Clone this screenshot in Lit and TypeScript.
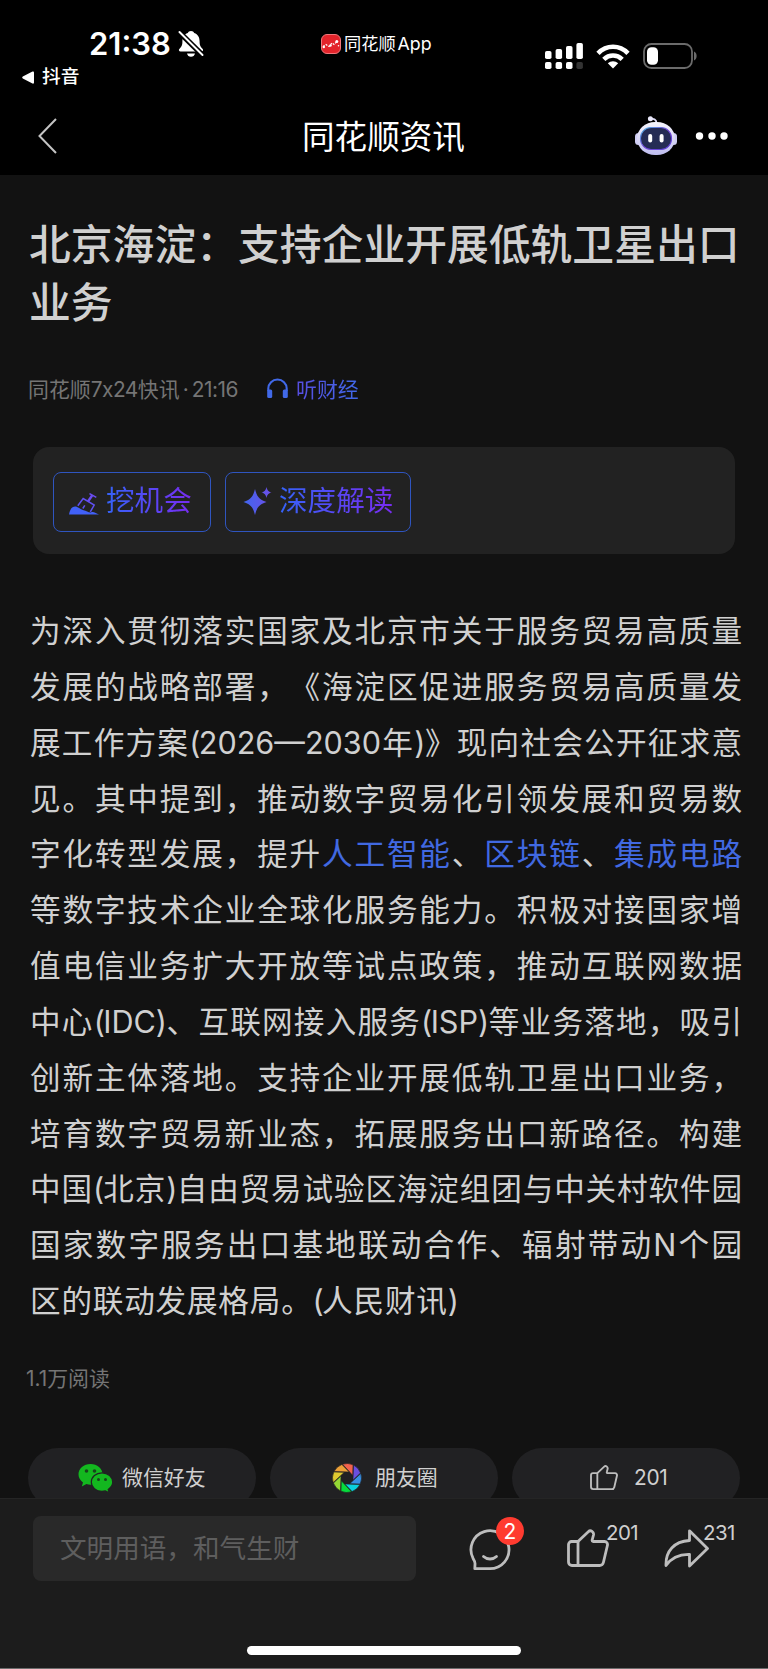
import { LitElement, html, css, svg } from "lit";
import { customElement } from "lit/decorators.js";

const LINES = [
  "为深入贯彻落实国家及北京市关于服务贸易高质量",
  "发展的战略部署，《海淀区促进服务贸易高质量发",
  "展工作方案(2026—2030年)》现向社会公开征求意",
  "见。其中提到，推动数字贸易化引领发展和贸易数",
  "字化转型发展，提升[人工智能]、[区块链]、[集成电路]",
  "等数字技术企业全球化服务能力。积极对接国家增",
  "值电信业务扩大开放等试点政策，推动互联网数据",
  "中心(IDC)、互联网接入服务(ISP)等业务落地，吸引",
  "创新主体落地。支持企业开展低轨卫星出口业务，",
  "培育数字贸易新业态，拓展服务出口新路径。构建",
  "中国(北京)自由贸易试验区海淀组团与中关村软件园",
  "国家数字服务出口基地联动合作、辐射带动N个园",
  "区的联动发展格局。(人民财讯)",
];

const formatLine = (line: string) =>
  line.split(/(\[[^\]]+\]|[()])/).map((part) => {
    if (part.startsWith("[")) return html`<a class="term">${part.slice(1, -1)}</a>`;
    if (part === "(" || part === ")") return html`<span class="paren">${part}</span>`;
    return part;
  });

const bell = svg`<svg width="26" height="28" viewBox="0 0 26 28">
  <path fill="#fff" d="M13 1c-1.600 0-2.800.8-3.200 2.100C6 4.300 4.400 7.500 4.400 11.500c0 4-1 5.200-2.600 7-.8.9-1 1.300-.8 2 .2.600.700.900 1.600.900h20.800c.900 0 1.400-.3 1.600-.9.2-.7 0-1.100-.8-2-1.600-1.800-2.600-3-2.600-7 0-4-1.600-7.200-5.400-8.400C15.800 1.800 14.600 1 13 1zM9 23.500h8c-.4 2-2 3.300-4 3.300s-3.600-1.300-4-3.300z"/>
  <path stroke="#000" stroke-width="5.400" d="M1 2 24.500 25"/>
  <path stroke="#fff" stroke-width="2" stroke-linecap="round" d="M1.500 2 24.500 25"/></svg>`;

const appBadge = svg`<svg width="20" height="20" viewBox="0 0 20 20">
  <rect x=".5" y=".5" width="19" height="19" rx="5.500" fill="#e3242b" stroke="#f0787c"/>
  <path d="M2 12.500 5 10.500 8 12.500 11 9 13 10.500 16 7.500" fill="none" stroke="#fff" stroke-width="1.200" stroke-dasharray="2 1.200"/>
  <circle cx="15.800" cy="7.600" r="1.500" fill="#fff"/><circle cx="9.500" cy="11.500" r="1.200" fill="#fff"/><circle cx="2.800" cy="13" r="1.200" fill="#fff"/><circle cx="17.500" cy="11.800" r=".8" fill="#fff"/></svg>`;

const signal = svg`<svg width="38" height="26" viewBox="0 0 38 26" fill="#fff">
  <rect x="0" y="8" width="6.500" height="8" rx="1.800"/><rect x="10.600" y="6" width="6.500" height="10" rx="1.800"/>
  <rect x="21" y="3" width="6.500" height="13" rx="1.800"/><rect x="31.400" y="0" width="6.500" height="16" rx="1.800"/>
  <rect x="0" y="19" width="6.500" height="7" rx="1.800"/><rect x="10.600" y="19" width="6.500" height="7" rx="1.800"/>
  <rect x="21" y="19" width="6.500" height="7" rx="1.800"/><rect x="31.400" y="19" width="6.500" height="7" rx="1.800" fill="#333"/></svg>`;

const wifi = svg`<svg width="34" height="25" viewBox="0 0 34 25" fill="none" stroke="#fff">
  <path stroke-width="4.600" d="M2 9.300C10.500.6 23.500.6 32 9.300"/>
  <path stroke-width="4.600" d="M7.800 15.300c5.300-5 13.100-5 18.400 0"/>
  <path fill="#fff" stroke="none" d="M11.800 19.300c3-2.700 7.400-2.700 10.400 0L17 24.500z"/></svg>`;

const battery = svg`<svg width="55" height="26" viewBox="0 0 55 26">
  <rect x="1" y="1" width="48" height="24" rx="7.500" fill="none" stroke="#6b6b6b" stroke-width="1.800"/>
  <rect x="4" y="4.300" width="11" height="17.400" rx="4.500" fill="#fff"/>
  <path d="M51 8.500c3.500 1.300 3.500 7.700 0 9z" fill="#6b6b6b"/></svg>`;

const robot = svg`<svg width="42" height="40" viewBox="0 0 42 40">
  <defs><linearGradient id="shell" x1="0" y1="0" x2="0" y2="1"><stop offset="0" stop-color="#f6f5fd"/><stop offset="1" stop-color="#bfbdf0"/></linearGradient>
  <linearGradient id="rim" x1="0" y1="0" x2="1" y2="1"><stop offset="0" stop-color="#49b7df"/><stop offset=".5" stop-color="#7748dc"/><stop offset="1" stop-color="#5940d8"/></linearGradient></defs>
  <path d="M15 3.500c4-1.500 6.500 0 6.500 4" fill="none" stroke="#dcdaf5" stroke-width="1.800"/>
  <circle cx="15.400" cy="2.800" r="2.500" fill="#e9e8fa"/>
  <rect x="0" y="17" width="7" height="12" rx="3.500" fill="#cfcdf3"/><rect x="35" y="17" width="7" height="12" rx="3.500" fill="#cfcdf3"/>
  <rect x="2" y="6" width="38" height="33" rx="18" ry="16.500" fill="url(#shell)"/>
  <rect x="5.500" y="11.500" width="31" height="22" rx="10.500" fill="#252c55" stroke="url(#rim)" stroke-width="1.100"/>
  <rect x="13.200" y="18" width="4" height="8.600" rx="2" fill="#fff"/><rect x="24.600" y="18" width="4" height="8.600" rx="2" fill="#fff"/></svg>`;

const headphones = svg`<svg width="23" height="21" viewBox="0 0 23 21">
  <path d="M2.300 13v-2.500a9.200 9 0 0 1 18.400 0V13" fill="none" stroke="#4169e8" stroke-width="2.100"/>
  <rect x="1.200" y="11.500" width="5" height="8.500" rx="1.500" fill="#4169e8"/><rect x="16.800" y="11.500" width="5" height="8.500" rx="1.500" fill="#4169e8"/></svg>`;

const shovel = svg`<svg class="shovel" width="31" height="22" viewBox="0 0 31 22">
  <path fill="#4161f8" d="M0 21.600C.6 18 1.800 15.300 3.600 14.300c1.500-.9 3-.9 4.500-.3 2.500 1 4 2.800 6.500 3.200 2.500.5 4.500 2.300 7 2.300 1.800-.6 3.200-.6 4.600.3 1.500.8 2.600 1.300 4.300 1.800z"/>
  <path fill="none" stroke="#5f50f0" stroke-width="1.500" d="M8.800 12.800 14.200 5.500 25.200 12 21.300 18.800M13.800 15.500l2-3.200"/>
  <path fill="none" stroke="#6a4cf0" stroke-width="2.400" d="M19 8.500 23.400 2"/><path stroke="#6a4cf0" stroke-width="1.500" d="M20.500.6 27.300 4.400"/></svg>`;

const sparkle = svg`<svg width="30" height="30" viewBox="0 0 30 30">
  <defs><linearGradient id="spark"><stop stop-color="#4166ee"/><stop offset="1" stop-color="#6d4fe8"/></linearGradient></defs>
  <path fill="url(#spark)" d="M12 3c1.800 7.500 4 10.300 11.500 13C16 18.700 13.800 21.500 12 29 10.200 21.500 8 18.700.5 16 8 13.300 10.200 10.500 12 3zM23.500 1c.9 3.500 1.800 4.600 5 5.500-3.200.9-4.100 2-5 5.500-.9-3.500-1.800-4.600-5-5.500 3.200-.9 4.100-2 5-5.500z"/></svg>`;

const wechat = svg`<svg width="35" height="30" viewBox="0 0 35 30">
  <path fill="#13b71f" d="M12.500 1C5.800 1 .5 5.600.5 11.300c0 3.300 1.700 6.200 4.500 8.100L3.800 23.500l4.600-2.400c1.300.4 2.700.6 4.100.6 6.700 0 12-4.600 12-10.300S19.200 1 12.500 1z"/>
  <path fill="#13b71f" stroke="#212123" stroke-width="1.200" d="M24 9.800c-6 0-10.700 4.100-10.700 9.300S18 28.400 24 28.400c1.200 0 2.300-.1 3.300-.5l4 2-1.100-3.500c2.700-1.700 4.500-4.300 4.500-7.300 0-5.200-4.700-9.300-10.700-9.300z"/>
  <g fill="#17451b"><circle cx="8.500" cy="8" r="1.800"/><circle cx="16.500" cy="8" r="1.800"/><circle cx="20.500" cy="16.500" r="1.500"/><circle cx="27.500" cy="16.500" r="1.500"/></g></svg>`;

const BLADES = ["#f2624d", "#6a4fe0", "#3690e6", "#0bd0de", "#06dc3c", "#94d834", "#e0ca30", "#eba038"];
const aperture = svg`<svg width="30" height="30" viewBox="-15 -15 30 30">
  ${BLADES.map((c, i) => svg`<path fill=${c} stroke="#212123" stroke-width=".6" transform="rotate(${i * 45})" d="M-4.500-13.800 A14.500 14.500 0 0 1 6-13.200 L5.800-2.600z"/>`)}
  <circle r="5.500" fill="#212123"/></svg>`;

const thumb = (w: number, h: number, sw: number) => svg`<svg width=${w} height=${h} viewBox="0 0 42 38" fill="none" stroke="#bdbdbd" stroke-width=${sw} stroke-linejoin="round">
  <path d="M11 12.500H4.500A3 3 0 0 0 1.500 15.500V33a3.500 3.500 0 0 0 3.500 3.500h27.500a4 4 0 0 0 3.900-3l4-17c.5-2-.7-4-2.900-4H26c-1-.3-1-1-.7-2l1.200-4.500c.6-3-2.800-5.500-5.200-3.300z"/><path d="M11 12.500v24"/></svg>`;

const chat = svg`<svg width="42" height="42" viewBox="0 0 42 42" fill="none" stroke="#bdbdbd" stroke-width="2.800" stroke-linejoin="round" stroke-linecap="round">
  <path d="M5.800 39.700H21a19 19 0 1 0-17-10.500c1.500 2.500 2.300 4 2 6z"/><path d="M14.500 27.500c3.500 3.300 9.500 3.300 13 0"/></svg>`;

const share = svg`<svg width="45" height="39" viewBox="0 0 45 39" fill="none" stroke="#bdbdbd" stroke-width="2.800" stroke-linejoin="round">
  <path d="M25.500 1.800 43.500 19.500 25.500 37V25.300C15 25 7.500 28.500 2 36.500 1.500 22 10 12.500 25.500 11.500z"/></svg>`;

@customElement("app-root")
export class AppRoot extends LitElement {
  static styles = css`
    :host { display: flex; flex-direction: column; width: 768px; height: 1669px; overflow: hidden; background: #121212; color: #d0d0d0;
      font-family: Inter, "Noto Sans CJK SC", sans-serif; text-spacing-trim: space-all; white-space: nowrap; }
    * { box-sizing: border-box; }
    svg { display: block; flex: none; }
    .header { flex: none; height: 175px; background: #000; color: #fff; }
    .status { display: grid; grid-template-columns: 321px 222px 1fr; height: 64px; padding-top: 24px; }
    .time { display: flex; align-items: center; height: 40px; padding-left: 89px; gap: 8px; font-size: 31px; font-weight: 600; line-height: 40px; }
    .clock { width: 81px; }
    .source { display: flex; align-items: center; height: 40px; gap: 3px; font-size: 17.200px; line-height: 40px; }
    .app { font-size: 17.800px; padding-left: 2px; }
    .radios { display: flex; align-items: center; height: 64px; gap: 13px; padding-left: 2px; }
    .return { display: flex; align-items: center; height: 26px; padding-left: 22px; gap: 8px; font-size: 18.700px; line-height: 26px; font-weight: 500; }
    .nav { display: grid; grid-template-columns: 302px 333px 1fr; align-items: center; height: 85px; padding-top: 7px; }
    .back { padding-left: 38px; }
    .name { font-size: 32.600px; line-height: 40px; padding-top: 2px; }
    .tools { display: flex; align-items: center; gap: 18px; }
    .article { flex: none; height: 1323px; overflow: hidden; }
    .headline { margin: 0; padding: 42px 0 0 29px; font-size: 41.800px; line-height: 57.500px; font-weight: 500; }
    .meta { display: flex; align-items: center; height: 30px; margin-top: 41px; padding-left: 28px; font-size: 20.900px; color: #757575; }
    .byline { width: 238px; }
    .lat { letter-spacing: -.5px; }
    .dot { margin: 0 3px; }
    .listen { padding-left: 7px; background: linear-gradient(90deg, #5a4be0, #4068e8); -webkit-background-clip: text; color: transparent; }
    .card { display: flex; align-items: center; gap: 14px; margin: 44px 33px 0; padding: 0 20px; height: 107px; border-radius: 16px; background: #222; }
    .action { display: flex; align-items: center; height: 60px; border: 1.500px solid #2f55c0; border-radius: 8px; font-size: 28.600px; padding-bottom: 3px; margin-bottom: -3px; }
    .dig { width: 158px; padding-left: 15px; gap: 6px; }
    .deep { width: 186px; padding-left: 17px; gap: 6px; }
    .shovel { margin-top: 7px; }
    .grad { background: linear-gradient(90deg, #3563f8, #782cf0); -webkit-background-clip: text; color: transparent; line-height: 44px; }
    .body { padding: 49px 26px 0 30px; }
    .line { font-size: 30.600px; line-height: 55.850px; height: 55.850px; text-align: justify; text-align-last: justify; }
    .line:last-child { text-align-last: left; letter-spacing: .8px; }
    .paren { letter-spacing: -1.600px; }
    .term { color: #4169e1; }
    .reads { margin-top: 35px; padding-left: 26px; font-size: 20.900px; line-height: 30px; color: #757575; }
    .shares { display: grid; grid-template-columns: repeat(3, 228px); gap: 14px; padding: 54px 28px 0; }
    .pill { display: flex; align-items: center; height: 60px; border-radius: 30px; background: #212123; font-size: 20.900px; }
    .pill span { margin-top: -3px; }
    .wx { padding-left: 50px; gap: 9px; }
    .pyq { padding-left: 62px; gap: 13px; }
    .up { padding-left: 78px; gap: 16px; }
    .pill.up span { margin-top: 0; letter-spacing: -.3px; }
    .footer { flex: none; height: 171px; background: #1c1c1c; border-top: 1px solid #252525; border-bottom: 1px solid #6c6c6c; }
    .tools-row { display: grid; grid-template-columns: 436px 98px 97px 71px; height: 65px; margin: 17px 0 0 33px; }
    .input { width: 383px; height: 65px; border-radius: 8px; background: #292929; color: #5e5e5e; font-size: 26.600px; line-height: 65px; padding-left: 27px; }
    .item { position: relative; padding-top: 13px; }
    .count { position: absolute; left: 39px; top: 5px; font-size: 20.500px; line-height: 24px; letter-spacing: -.6px; color: #cfcfcf; }
    .badge { position: absolute; left: 27px; top: 1px; width: 28px; height: 28px; border-radius: 50%; background: #ff3b30; color: #fff; font-size: 21px; line-height: 29px; text-align: center; }
    .home { width: 274px; height: 9px; border-radius: 5px; background: #fff; margin: 65px auto 0; }
  `;

  render() {
    return html`
      <header class="header">
        <div class="status">
          <div class="time"><span class="clock">21:38</span>${bell}</div>
          <div class="source">${appBadge}<span>同花顺<span class="app">App</span></span></div>
          <div class="radios">${signal}${wifi}${battery}</div>
        </div>
        <div class="return"><svg width="12" height="13" viewBox="0 0 12 13"><path fill="#fff" d="M.8 5.600 10.500.5Q12 0 12 1.500v10Q12 13 10.500 12.500L.8 7.400Q-.4 6.500.8 5.600z"/></svg>抖音</div>
        <nav class="nav">
          <div class="back"><svg width="20" height="36" viewBox="0 0 20 36"><path fill="none" stroke="#c4c4c4" stroke-width="2" d="M18 1 1.500 18 18 35"/></svg></div>
          <div class="name">同花顺资讯</div>
          <div class="tools">${robot}<svg width="34" height="8" viewBox="0 0 34 8" fill="#fff"><circle cx="4.500" cy="4" r="3.700"/><circle cx="17" cy="4" r="3.700"/><circle cx="29" cy="4" r="3.700"/></svg></div>
        </nav>
      </header>
      <main class="article" lang="zh-CN">
        <h1 class="headline">北京海淀：支持企业开展低轨卫星出口<br />业务</h1>
        <div class="meta"><span class="byline">同花顺<span class="lat">7x24</span>快讯<span class="dot">·</span><span class="lat">21:16</span></span>${headphones}<span class="listen">听财经</span></div>
        <section class="card">
          <div class="action dig">${shovel}<span class="grad">挖机会</span></div>
          <div class="action deep">${sparkle}<span class="grad">深度解读</span></div>
        </section>
        <section class="body">${LINES.map((l) => html`<div class="line">${formatLine(l)}</div>`)}</section>
        <div class="reads">1.1万阅读</div>
        <div class="shares">
          <div class="pill wx">${wechat}<span>微信好友</span></div>
          <div class="pill pyq">${aperture}<span>朋友圈</span></div>
          <div class="pill up">${thumb(28, 27, 2.8)}<span>201</span></div>
        </div>
      </main>
      <footer class="footer">
        <div class="tools-row">
          <div><div class="input">文明用语，和气生财</div></div>
          <div class="item">${chat}<span class="badge">2</span></div>
          <div class="item">${thumb(42, 38, 2.8)}<span class="count">201</span></div>
          <div class="item">${share}<span class="count">231</span></div>
        </div>
        <div class="home"></div>
      </footer>`;
  }
}
